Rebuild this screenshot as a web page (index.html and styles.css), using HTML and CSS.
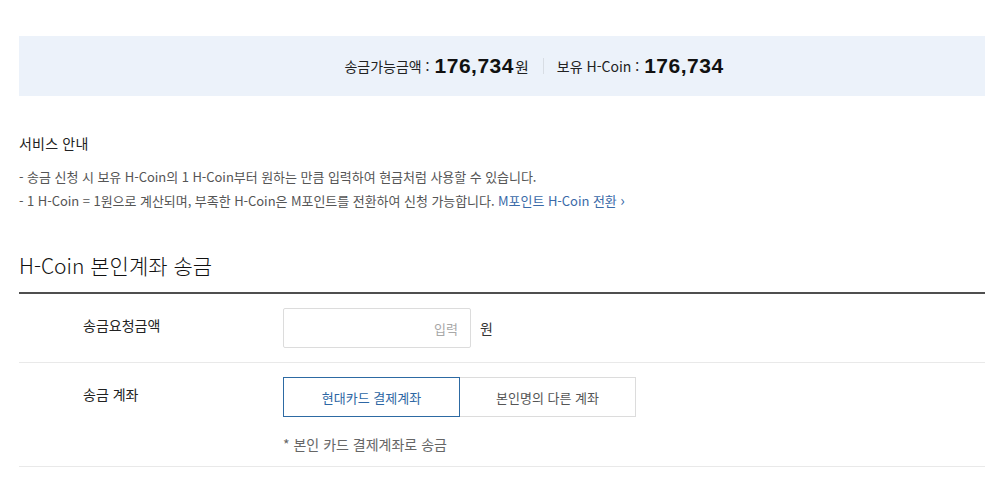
FILE: index.html
```html
<!DOCTYPE html>
<html lang="ko">
<head>
<meta charset="utf-8">
<link rel="stylesheet" href="styles.css">
</head>
<body>
<div class="page">
  <div class="summary">
    <span class="label">송금가능금액 :</span>
    <strong class="num">176,734</strong><span class="unit">원</span>
    <span class="sep"></span>
    <span class="label">보유 H-Coin :</span>
    <strong class="num">176,734</strong>
  </div>

  <div class="notice">
    <h3 class="notice-title">서비스 안내</h3>
    <ul class="notice-list">
      <li>- 송금 신청 시 보유 H-Coin의 1 H-Coin부터 원하는 만큼 입력하여 현금처럼 사용할 수 있습니다.</li>
      <li>- 1 H-Coin = 1원으로 계산되며, 부족한 H-Coin은 M포인트를 전환하여 신청 가능합니다. <a class="link" href="#">M포인트 H-Coin 전환 <span class="chev">&#x203A;</span></a></li>
    </ul>
  </div>

  <h2 class="section-title">H-Coin 본인계좌 송금</h2>
  <div class="form">
    <div class="row">
      <div class="row-label">송금요청금액</div>
      <div class="row-value">
        <div class="amount">
          <input class="amount-input" type="text" placeholder="입력">
          <span class="amount-unit">원</span>
        </div>
      </div>
    </div>
    <div class="row row-last">
      <div class="row-label">송금 계좌</div>
      <div class="row-value">
        <div class="tabs">
          <button class="tab tab-active" type="button">현대카드 결제계좌</button>
          <button class="tab" type="button">본인명의 다른 계좌</button>
        </div>
        <p class="note">* 본인 카드 결제계좌로 송금</p>
      </div>
    </div>
  </div>
</div>
</body>
</html>
```

FILE: styles.css
```css
html, body {
  margin: 0;
  padding: 0;
  background: #fff;
}
body {
  font-family: "Noto Sans CJK KR", "Noto Sans", sans-serif;
  color: #222;
}
.page {
  margin-left: 19px;
  padding-top: 36px;
}
.summary {
  box-sizing: border-box;
  height: 60px;
  padding-left: 64px;
  background: #ecf2fa;
  display: flex;
  align-items: center;
  justify-content: center;
  font-size: 14px;
  color: #222;
}
.summary .label {
  margin-right: 5px;
}
.summary .num {
  font-family: "Liberation Sans", sans-serif;
  font-weight: bold;
  font-size: 21px;
  color: #111;
  letter-spacing: 0.5px;
}
.summary .unit {
  margin-left: 1px;
  font-size: 15px;
}
.sep {
  width: 1px;
  height: 16px;
  background: #d8dde4;
  margin: 0 13px 0 14px;
}
.notice {
  margin-top: 37px;
}
.notice-title {
  margin: 0;
  font-size: 14px;
  font-weight: normal;
  line-height: 20px;
  color: #222;
  letter-spacing: 0.2px;
}
.notice-list {
  list-style: none;
  margin: 12px 0 0;
  padding: 0;
  font-size: 13px;
  line-height: 23px;
  color: #555;
  letter-spacing: -0.05px;
}
.link {
  color: #3a6aa8;
  text-decoration: none;
}
.chev {
  font-size: 15px;
}
.section-title {
  margin: 38px 0 0;
  font-size: 21px;
  font-weight: 300;
  line-height: 30px;
  color: #111;
  padding-bottom: 12px;
}
.form {
  border-top: 2px solid #4f4f4f;
}
.row {
  display: flex;
  border-bottom: 1px solid #e9e9e9;
  padding: 14px 0;
}
.row-last {
  padding-bottom: 12px;
}
.row-label {
  width: 200px;
  padding-left: 64px;
  font-size: 14px;
  line-height: 20px;
  color: #222;
  padding-top: 7px;
}
.row-value {
  flex: 1;
}
.amount {
  display: flex;
  align-items: center;
}
.amount-input {
  box-sizing: border-box;
  width: 188px;
  height: 40px;
  border: 1px solid #dcdcdc;
  border-radius: 2px;
  padding: 0 12px;
  text-align: right;
  font-family: inherit;
  font-size: 13px;
  outline: none;
}
.amount-input::placeholder {
  color: #a8a8a8;
}
.amount-unit {
  margin-left: 9px;
  font-size: 14px;
  color: #333;
}
.tabs {
  display: flex;
}
.tab {
  box-sizing: border-box;
  height: 40px;
  width: 176px;
  background: #fff;
  border: 1px solid #dcdcdc;
  font-family: inherit;
  font-size: 13px;
  color: #555;
  padding: 0;
}
.tab + .tab {
  border-left: none;
}
.tab-active {
  width: 177px;
  border-color: #2d6aa3;
  color: #2d67a4;
}
.note {
  margin: 17px 0 0;
  font-size: 14px;
  line-height: 20px;
  color: #666;
}
```
